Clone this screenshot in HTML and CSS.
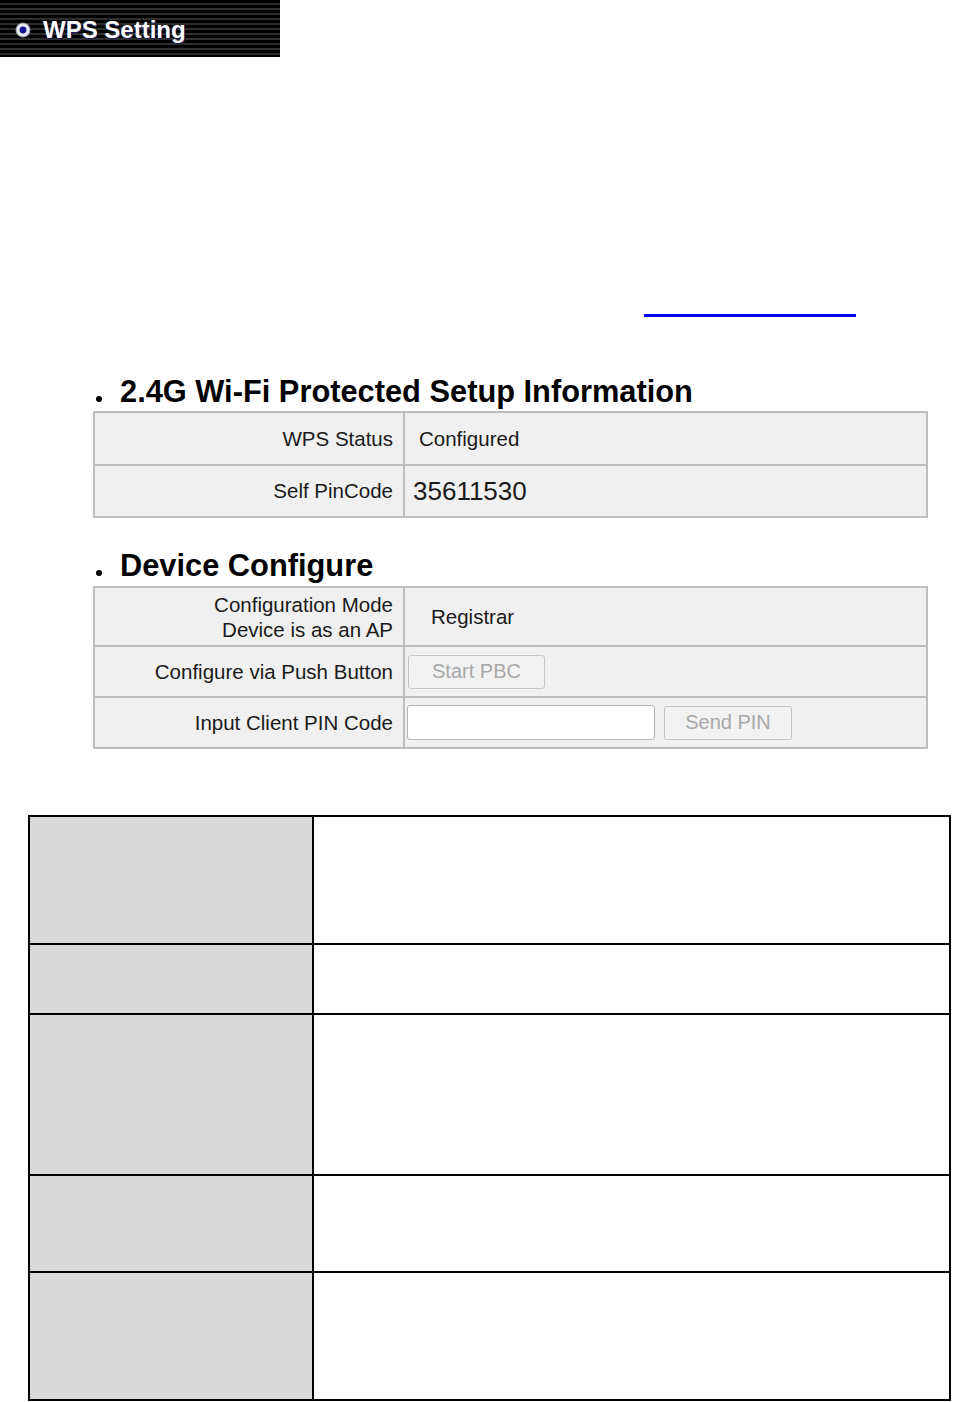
FILE: index.html
```html
<!DOCTYPE html>
<html>
<head>
<meta charset="utf-8">
<link rel="stylesheet" href="styles.css">
</head>
<body>
<div class="banner">
  <svg class="banner-icon" width="16" height="16" viewBox="0 0 16 16">
    <circle cx="8" cy="8" r="7" fill="#e8e8f0" stroke="#9a9ab0" stroke-width="1"/>
    <circle cx="8" cy="8" r="3.4" fill="#14148c"/>
  </svg>
  <span class="banner-text">WPS Setting</span>
</div>

<div class="link-row"><a class="blank-link" href="#">&nbsp;</a></div>

<div class="section-title"><span class="dot"></span>2.4G Wi-Fi Protected Setup Information</div>
<table class="cfg cfg-info">
  <tr class="r52">
    <td class="lbl">WPS Status</td>
    <td class="val">Configured</td>
  </tr>
  <tr class="r51">
    <td class="lbl">Self PinCode</td>
    <td class="val pin">35611530</td>
  </tr>
</table>

<div class="section-title second"><span class="dot"></span>Device Configure</div>
<table class="cfg cfg-dev">
  <tr class="r58">
    <td class="lbl two">Configuration Mode<br>Device is as an AP</td>
    <td class="val reg">Registrar</td>
  </tr>
  <tr class="r51b">
    <td class="lbl">Configure via Push Button</td>
    <td class="val ctl"><button class="btn btn-pbc" disabled>Start PBC</button></td>
  </tr>
  <tr class="r51b">
    <td class="lbl">Input Client PIN Code</td>
    <td class="val ctl"><span class="pin-input"></span><button class="btn btn-pin" disabled>Send PIN</button></td>
  </tr>
</table>

<table class="desc">
  <tr class="d1"><td class="dk"></td><td class="dv"></td></tr>
  <tr class="d2"><td class="dk"></td><td class="dv"></td></tr>
  <tr class="d3"><td class="dk"></td><td class="dv"></td></tr>
  <tr class="d4"><td class="dk"></td><td class="dv"></td></tr>
  <tr class="d5"><td class="dk"></td><td class="dv"></td></tr>
</table>
</body>
</html>
```
FILE: styles.css
```css
html, body {
  margin: 0;
  padding: 0;
  background: #fff;
  font-family: "Liberation Sans", Arial, sans-serif;
}

.banner {
  width: 280px;
  height: 57px;
  background: repeating-linear-gradient(to bottom, #000 0, #000 3px, #2e2e2e 3px, #2e2e2e 5px);
  display: flex;
  align-items: center;
  box-sizing: border-box;
  padding-left: 15px;
  padding-top: 2px;
}
.banner-icon {
  flex: none;
  margin-right: 12px;
}
.banner-text {
  color: #fff;
  font-weight: bold;
  font-size: 24px;
  text-shadow: 1px 1px 0 #1a1a60;
}

.link-row {
  margin-top: 257px;
  height: 6px;
  padding-left: 644px;
}
.blank-link {
  display: block;
  width: 212px;
  height: 3px;
  background: #0000ff;
  font-size: 0;
  line-height: 0;
  overflow: hidden;
}

.section-title {
  margin-top: 56px;
  margin-left: 96px;
  height: 32px;
  line-height: 32px;
  font-size: 30.8px;
  font-weight: bold;
  color: #000;
  margin-bottom: 3px;
  display: flex;
  align-items: baseline;
}
.section-title.second {
  margin-top: 32px;
  margin-bottom: 4px;
}
.dot {
  display: inline-block;
  width: 6px;
  height: 6px;
  border-radius: 50%;
  background: #000;
  margin-right: 18px;
}

.cfg {
  margin-left: 93px;
  width: 835px;
  border-collapse: collapse;
  border: 2px solid #bdbdbd;
  table-layout: fixed;
}
.cfg td {
  border: 2px solid #bdbdbd;
  background: #f0f0f0;
  padding: 0;
  font-size: 20.5px;
  color: #1a1a1a;
}
.cfg .lbl {
  width: 298px;
  text-align: right;
  padding-right: 10px;
}
.cfg .val {
  padding-left: 14px;
}
.cfg .pin {
  font-size: 26px;
  padding-left: 8px;
}
.cfg .reg {
  padding-left: 26px;
}
.cfg .ctl {
  padding-left: 2px;
}
.cfg .two {
  line-height: 25px;
}
.r52 td { height: 51px; }
.r51 td { height: 50px; }
.r58 td { height: 57px; }
.r51b td { height: 49px; }

.btn {
  font-family: "Liberation Sans", Arial, sans-serif;
  font-size: 20px;
  color: #a8a8a8;
  background: #f2f2f2;
  border: 1px solid #c4c4c4;
  border-radius: 3px;
  height: 34px;
  padding: 0;
  vertical-align: middle;
}
.btn-pbc {
  width: 137px;
  margin-left: 1px;
}
.btn-pin {
  width: 128px;
  margin-left: 9px;
}
.pin-input {
  display: inline-block;
  vertical-align: middle;
  width: 246px;
  height: 33px;
  background: #fff;
  border: 1px solid #b5b5b5;
  border-radius: 3px;
}

.desc {
  margin-top: 66px;
  margin-left: 28px;
  width: 923px;
  border-collapse: collapse;
  table-layout: fixed;
}
.desc td {
  border: 2px solid #000;
  padding: 0;
}
.desc .dk {
  width: 282px;
  background: #d9d9d9;
}
.desc .dv {
  background: #fff;
}
.d1 td { height: 126px; }
.d2 td { height: 68px; }
.d3 td { height: 159px; }
.d4 td { height: 95px; }
.d5 td { height: 126px; }
```
